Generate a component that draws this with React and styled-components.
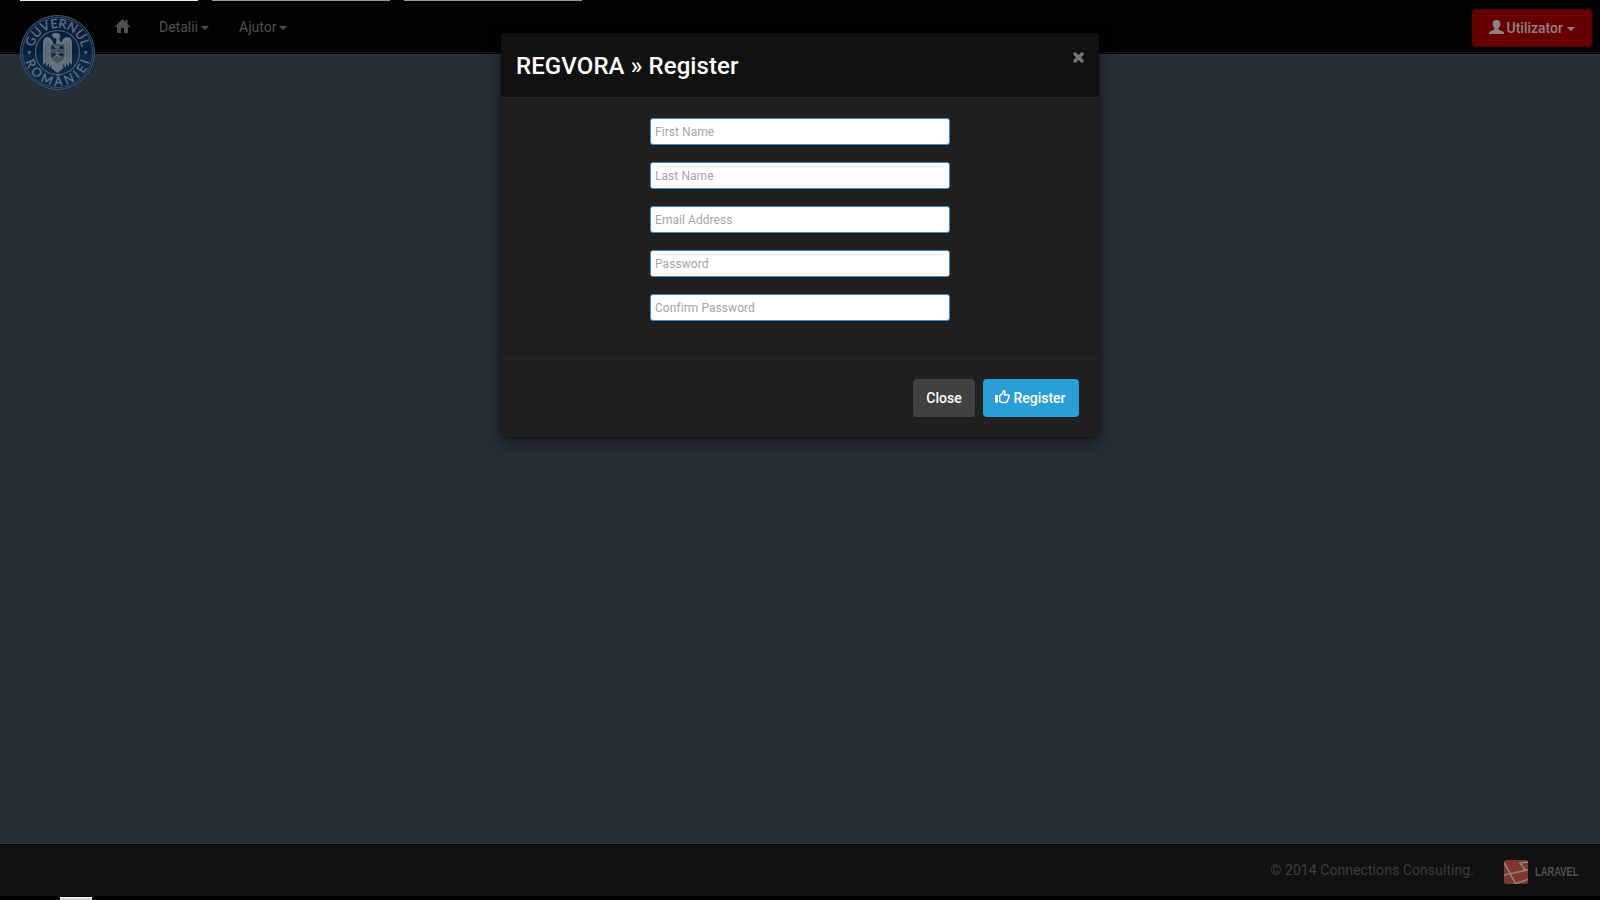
import React from 'react';
import styled, { createGlobalStyle } from 'styled-components';

const GlobalStyle = createGlobalStyle`
  *, *::before, *::after { box-sizing: border-box; }
  html, body { margin: 0; height: 100%; overflow: hidden; }
  body { background: #272e36; font-family: Roboto, "Liberation Sans", sans-serif; font-size: 14px; line-height: 20px; }
  svg { display: block; flex: none; }
`;

const Page = styled.div`
  display: flex;
  flex-direction: column;
  height: 900px;
  width: 1600px;
  position: relative;
`;

const Navbar = styled.header`
  display: flex;
  height: 54px;
  padding: 0 8px 0 20px;
  background: #020202;
  border-bottom: 1px solid #000;
  box-shadow: inset 0 -1px 0 #131313;
  flex: none;
`;

const TabStrip = styled.div`
  position: absolute;
  top: 0;
  left: 20px;
  display: flex;
  gap: 14px;
`;

const TabEdge = styled.span`
  width: 178px;
  height: 1px;
  background: ${(p) => (p.$active ? '#e9ebeb' : '#969998')};
`;

const Brand = styled.a`
  width: 75px;
  height: 75px;
  margin: 15px 20px 0 0;
`;

const NavLink = styled.a`
  display: flex;
  align-items: center;
  gap: 3px;
  height: 20px;
  margin: 17px 30px 0 0;
  color: #505050;
`;

const HomeLink = styled(NavLink)`
  margin: 16px 29px 0 0;
`;

const Caret = styled.span`
  width: 0;
  height: 0;
  margin-top: 2px;
  border: 4px solid transparent;
  border-top-color: currentColor;
  border-bottom: 0;
`;

const UserButton = styled.button`
  display: flex;
  align-items: center;
  width: 120px;
  height: 38px;
  margin: 9px 0 0 auto;
  padding: 0 0 0 16.5px;
  border: 0;
  border-radius: 4px;
  background: #660000;
  color: #8c8484;
  font: 500 14px/20px Roboto, sans-serif;
  & > svg { margin-top: -2px; }
  & > span:first-of-type { margin: 0 4px 0 3px; }
`;

const Footer = styled.footer`
  display: flex;
  align-items: center;
  justify-content: flex-end;
  height: 56px;
  margin-top: auto;
  padding: 0 23px 1px 0;
  background: #111;
  border-top: 1px solid #000;
  border-bottom: 4px solid #000;
  color: #3d3d3d;
`;

const Copyright = styled.span`
  margin: 0 30px 0 0;
  letter-spacing: 0.07px;
`;

const Framework = styled.span`
  display: flex;
  align-items: center;
  gap: 7px;
  margin-top: 3px;
`;

const FrameworkName = styled.span`
  width: 55px;
  margin-right: -13px;
  color: #505050;
  font: 700 12px/20px "Liberation Sans", sans-serif;
  transform: scaleX(0.78);
  transform-origin: left;
`;

const StatusEdge = styled.div`
  position: absolute;
  left: 60px;
  bottom: 0;
  width: 32px;
  height: 3px;
  background: #d8d8d8;
  border-top: 1px solid #fff;
`;

const Modal = styled.section`
  position: absolute;
  top: 33px;
  left: 501px;
  width: 598px;
  height: 404px;
  display: flex;
  flex-direction: column;
  border-radius: 5px;
  background: #202020;
  box-shadow: 0 0 0 1px rgba(0, 0, 0, 0.2), 0 5px 15px rgba(0, 0, 0, 0.5);
`;

const ModalHeader = styled.div`
  display: flex;
  justify-content: space-between;
  height: 65px;
  padding: 19px 15px 0;
  border-bottom: 1px solid #2b2b2b;
  border-radius: 5px 5px 0 0;
  background: #111;
`;

const ModalTitle = styled.h1`
  margin: 0;
  color: #fff;
  font-size: 24px;
  font-weight: 500;
  line-height: 28px;
  letter-spacing: 0.1px;
`;

const CloseIcon = styled.button`
  width: 11px;
  height: 11px;
  padding: 0;
  border: 0;
  background: none;
`;

const Form = styled.form`
  display: flex;
  flex-direction: column;
  align-items: center;
  gap: 17px;
  height: 260px;
  padding-top: 20px;
`;

const Field = styled.input`
  width: 300px;
  height: 27px;
  padding: 0 4px;
  border: 1px solid #428bca;
  border-radius: 3px;
  background: #fff;
  font: 400 12px/18px Roboto, sans-serif;
  letter-spacing: 0.06px;
  outline: 0;
  &::placeholder { color: #a6a6a6; opacity: 1; }
`;

const ModalFooter = styled.div`
  display: flex;
  justify-content: flex-end;
  gap: 8px;
  flex: 1;
  padding: 20px 20px 0;
  border-top: 1px solid #292929;
`;

const Button = styled.button`
  display: flex;
  align-items: center;
  justify-content: center;
  gap: 3px;
  width: ${(p) => (p.$primary ? 96 : 62)}px;
  height: 38px;
  padding: 0;
  border: 0;
  border-radius: 4px;
  background: ${(p) => (p.$primary ? '#2a9fd6' : '#424242')};
  color: #fff;
  font: 500 14px/20px Roboto, sans-serif;
  & > svg { margin: -3px 0 0 -1px; }
`;

const fields = [
  ['First Name', 'text'],
  ['Last Name', 'text'],
  ['Email Address', 'email'],
  ['Password', 'password'],
  ['Confirm Password', 'password'],
];

function Emblem() {
  return (
    <svg width="75" height="75" viewBox="0 0 75 75">
      <defs>
        <path id="arcTop" d="M12.800 37.500a24.700 24.700 0 0 1 49.400 0" />
        <path id="arcBottom" d="M4.300 37.500a33.200 33.200 0 0 0 66.400 0" />
      </defs>
      <circle cx="37.500" cy="37.500" r="37" fill="#071f3f" />
      <path d="M.5 39a37 37 0 0 0 74 0Z" fill="#0c2949" />
      <circle cx="37.500" cy="37.500" r="37" fill="none" stroke="#4c5a69" />
      <circle cx="37.500" cy="37.500" r="35" fill="none" stroke="#4c5a69" strokeWidth=".8" />
      <circle cx="37.500" cy="37.500" r="22" fill="none" stroke="#56616d" strokeWidth="1.100" />
      <g fill="#68747f" stroke="#68747f" strokeWidth=".25" fontFamily="Lato, sans-serif" fontSize="12.500" textAnchor="middle">
        <text><textPath href="#arcTop" startOffset="50%" textLength="67">GUVERNUL</textPath></text>
        <text><textPath href="#arcBottom" startOffset="50%" textLength="86">ROMÂNIEI</textPath></text>
      </g>
      <circle cx="9.300" cy="37.500" r="1.400" fill="#657180" />
      <circle cx="65.700" cy="37.500" r="1.400" fill="#657180" />
      <g fill="#69727b">
        <path d="M37 31c-2-3 0-5-1-8-2 1-3 0-3-2l-2-1 3-2h4c3 1 3 5 1 7 2 1 3 4 2 7Z" />
        <path d="M33.500 29c-1-5-4-7-6.500-7-3 1-4 3-4 6v22l3-3v5l3-4v5l4-5 4.500 4 4.500-4 4 5v-5l3 4v-5l3 3V28c0-4-1.500-6-4.500-6-3 0-5.500 2-6.500 7l-4 2Z" />
        <path d="M32 47l-1 6 6.500 5 6-5-1.500-7-4 3Z" />
      </g>
      <path d="M30.500 29h14v12q-1 5-7 7-6-2-7-7Z" fill="#44515f" />
      <path d="M31.500 31h4v3h-4Zm8 0h4v3h-4Zm-8 7h4v4h-4Zm8 0h4v3h-4Z" fill="#112b49" />
      <path d="M37.500 29v18M31 36h13M28 27v20M25.500 29v15M47 27v20M49.500 29v15" fill="none" stroke="#3b4d60" strokeWidth=".6" />
      <path d="M34 30l2 3 3-2M33 43l4-3 3 3M36 37l3 2" fill="none" stroke="#7b8187" strokeWidth=".9" />
    </svg>
  );
}

function HomeIcon() {
  return (
    <svg width="15" height="14" viewBox="0 0 15 14" fill="currentColor">
      <path d="M7.500 0 10.500 3V1h2v4L15 7.600V8h-2v6H9V9H6v5H2V8H0v-.4Z" />
    </svg>
  );
}

function UserIcon() {
  return (
    <svg width="15" height="14" viewBox="0 0 15 14" fill="currentColor">
      <path d="M7.500 0c2.500 0 3.900 1.500 3.900 3.800 0 1.700-.7 3.300-1.800 4.200v1c0 .5.300.9.800 1.100l3.400 1.400c.8.300 1.200.8 1.200 1.500v1H0v-1c0-.7.400-1.200 1.200-1.500l3.400-1.400c.5-.2.800-.6.800-1.100V8C4.300 7.100 3.600 5.500 3.600 3.800 3.600 1.500 5 0 7.500 0Z" />
    </svg>
  );
}

function ThumbIcon() {
  return (
    <svg width="15" height="14" viewBox="0 0 15 14">
      <path d="M0 5h3v7.500H0Z" fill="#fff" />
      <path d="M4.700 6 7.600 3.200 8.500.8c1-.3 1.700.5 1.500 1.500L9.300 5h3.500c1.400 0 1.700 1.200 1.200 2.200l-1.900 4.200c-.3.700-.8 1.100-1.600 1.100H7.200c-.8 0-1.700-.5-2.500-1.200Z" fill="none" stroke="#fff" strokeWidth="1.500" strokeLinejoin="round" />
    </svg>
  );
}

function LaravelIcon() {
  return (
    <svg width="24" height="24" viewBox="0 0 24 24">
      <rect width="24" height="24" rx="2.500" fill="#80362f" />
      <path d="M0 2.500 11.500 23.500 24 19.500M0 15 24 9.700M24 2 16 3.200 21.800 10.500" fill="none" stroke="#898483" strokeWidth="1.600" />
    </svg>
  );
}

export default function App() {
  return (
    <Page>
      <GlobalStyle />
      <Navbar>
        <Brand><Emblem /></Brand>
        <HomeLink><HomeIcon /></HomeLink>
        <NavLink>Detalii<Caret /></NavLink>
        <NavLink>Ajutor<Caret /></NavLink>
        <UserButton><UserIcon /><span>Utilizator</span><Caret /></UserButton>
      </Navbar>
      <TabStrip><TabEdge $active /><TabEdge /><TabEdge /></TabStrip>
      <Footer>
        <Copyright>© 2014 Connections Consulting.</Copyright>
        <Framework>
          <LaravelIcon />
          <FrameworkName>LARAVEL</FrameworkName>
        </Framework>
      </Footer>
      <StatusEdge />
      <Modal>
        <ModalHeader>
          <ModalTitle>REGVORA » Register</ModalTitle>
          <CloseIcon aria-label="Close">
            <svg width="11" height="11" viewBox="0 0 11 11">
              <path d="M2 2l7 7M9 2 2 9" stroke="#777" strokeWidth="3.400" strokeLinecap="round" />
            </svg>
          </CloseIcon>
        </ModalHeader>
        <Form>
          {fields.map(([label, type]) => (
            <Field key={label} type={type} placeholder={label} />
          ))}
        </Form>
        <ModalFooter>
          <Button>Close</Button>
          <Button $primary><ThumbIcon />Register</Button>
        </ModalFooter>
      </Modal>
    </Page>
  );
}
